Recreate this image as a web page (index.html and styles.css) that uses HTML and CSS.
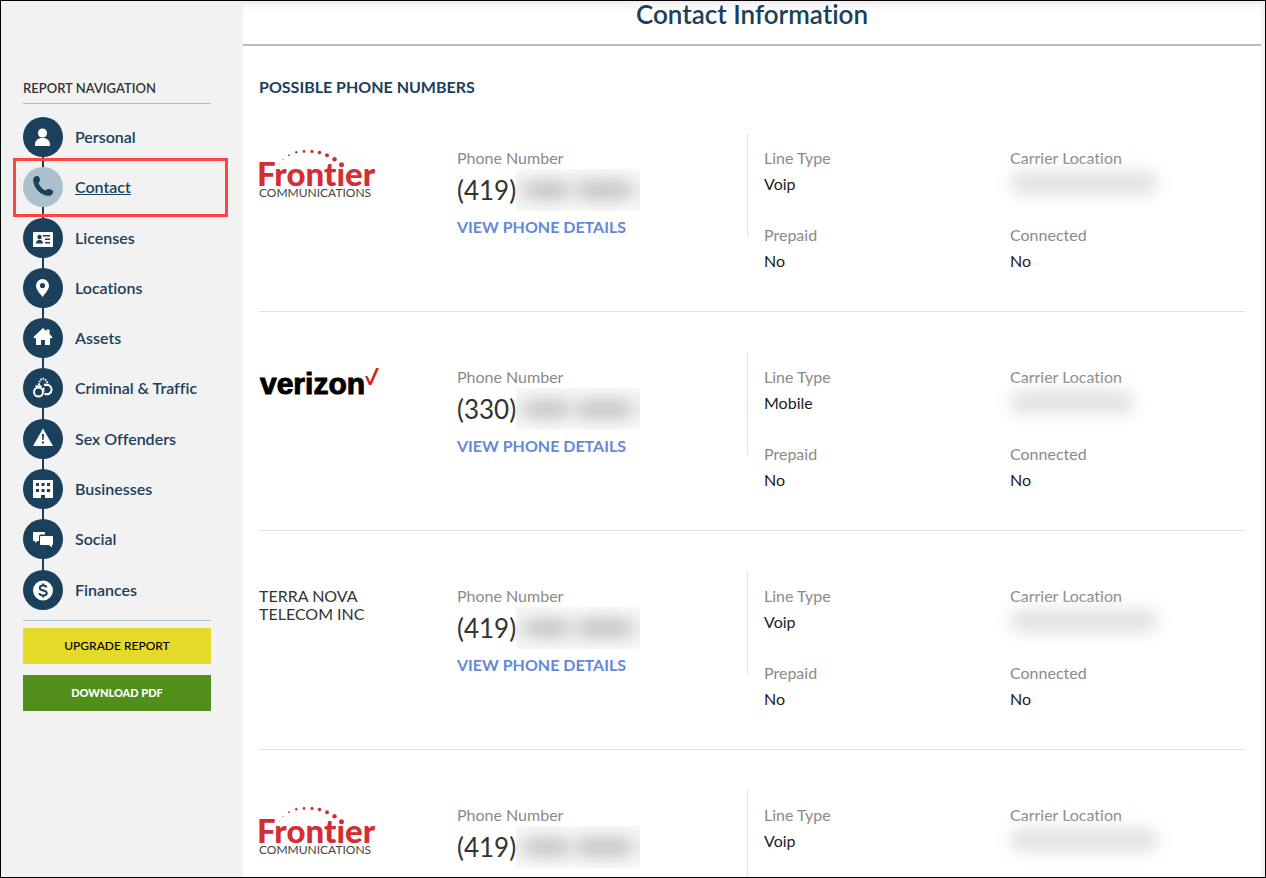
FILE: index.html
```html
<!DOCTYPE html>
<html lang="en">
<head>
<meta charset="utf-8">
<meta name="viewport" content="width=device-width, initial-scale=1">
<title>Contact Information</title>
<link rel="stylesheet" href="styles.css">
</head>
<body>
<div class="frame">
  <aside class="sidebar">
    <h2 class="nav-title">REPORT NAVIGATION</h2>
    <nav aria-label="Report navigation">
      <ul class="nav-list">
        <li><a href="#personal"><span class="dot"><svg viewBox="0 0 40 40"><circle cx="19.500" cy="16" r="4.600"/><path d="M12 29v-1.500c0-4 3-6.500 7.500-6.500s7.500 2.500 7.500 6.500V29z"/></svg></span>Personal</a></li>
        <li class="current"><a href="#contact" aria-current="page"><span class="dot"><svg viewBox="0 0 40 40"><path d="M10.300 12.500c.3-2.400 2.300-3.900 4.300-3.400 1.500.4 3 3.200 2.200 5.200l-1.300 1.500c.8 3 3.500 6.100 6.700 7.600l2.200-1.200c1.800-.7 4.700.4 5.500 1.800.8 1.700-.8 4.200-3.100 4.700-7.600 1.500-17.200-8.100-16.500-16.200z"/></svg></span>Contact</a></li>
        <li><a href="#licenses"><span class="dot"><svg viewBox="0 0 40 40"><rect x="10" y="14" width="20" height="15" rx="1"/><g fill="#1b405b"><circle cx="16.500" cy="19" r="2.200"/><path d="M13 25.500c0-5 7-5 7 0zM20 17h7v1.400h-7zM22 20.500h5v1.400h-5zM22 24h5v1.400h-5z"/></g></svg></span>Licenses</a></li>
        <li><a href="#locations"><span class="dot"><svg viewBox="0 0 40 40"><path fill-rule="evenodd" d="M19.500 11a6.500 6.500 0 0 0-6.500 6.500c0 4 3.500 7.500 6.500 11.500 3-4 6.500-7.500 6.500-11.500a6.500 6.500 0 0 0-6.500-6.500zm0 4a2.600 2.600 0 1 1 0 5.200 2.600 2.600 0 0 1 0-5.200z"/></svg></span>Locations</a></li>
        <li><a href="#assets"><span class="dot"><svg viewBox="0 0 40 40"><path d="M20 10l-9.500 9 .8 1.200H13V27h5v-5h4v5h5v-6.800h1.700l.8-1.200-3-3v-4.500h-3v1.700z"/></svg></span>Assets</a></li>
        <li><a href="#criminal"><span class="dot"><svg viewBox="0 0 40 40"><g fill="none" stroke="#fff"><circle cx="15.500" cy="24" r="4.500" stroke-width="2"/><path d="M22 17.300a4.700 4.700 0 1 1-.5 8.300" stroke-width="2"/><path d="M21 19.500q-1 2 0 4" stroke-width="1.500"/><path d="M12.500 18.200h6M21 16.800h5" stroke-width="2"/><path d="M16 17c0-3 1-5 3.500-6.500 2 0 4 1.500 5 5.500" stroke-width="2" stroke-dasharray="1.600 1"/></g></svg></span>Criminal &amp; Traffic</a></li>
        <li><a href="#offenders"><span class="dot"><svg viewBox="0 0 40 40"><path d="M20 9.500L30 27H10z"/><path fill="#1b405b" d="M19 15h2l-.3 6h-1.400zM19 22.500h2v2h-2z"/></svg></span>Sex Offenders</a></li>
        <li><a href="#businesses"><span class="dot"><svg viewBox="0 0 40 40"><path fill-rule="evenodd" d="M10 11h20v18h-8v-3h-4v3h-8zM13 14v3h3v-3zM18.500 14v3h3v-3zM24 14v3h3v-3zM13 20v3h3v-3zM18.500 20v3h3v-3zM24 20v3h3v-3z"/></svg></span>Businesses</a></li>
        <li><a href="#social"><span class="dot"><svg viewBox="0 0 40 40"><path d="M11 13h10q1 0 1 1v1.500h-4q-2 0-2 2V22h-1.500L12 24v-2h-1q-1 0-1-1v-7q0-1 1-1z"/><path d="M18 17h11q1 0 1 1v7q0 1-1 1v2.500L26 26h-8q-1 0-1-1v-7q0-1 1-1z"/></svg></span>Social</a></li>
        <li><a href="#finances"><span class="dot"><svg viewBox="0 0 40 40"><circle cx="20" cy="20.500" r="10"/><path fill="none" stroke="#1b405b" stroke-width="2" d="M23.500 17.500c-.3-1.500-1.500-2-3.300-2-2 0-3.400.8-3.400 2.400 0 3.500 7 1.500 7 5.200 0 1.800-1.500 2.500-3.600 2.500s-3.500-.8-3.800-2.500M20.200 13.500v2M20.200 25.500v2"/></svg></span>Finances</a></li>
      </ul>
    </nav>
    <div class="actions">
      <button type="button" class="btn upgrade">UPGRADE REPORT</button>
      <button type="button" class="btn download">DOWNLOAD PDF</button>
    </div>
  </aside>
  <main class="main">
    <header class="head"><h1>Contact Information</h1></header>
    <section class="phones">
      <h2 class="section-title">POSSIBLE PHONE NUMBERS</h2>

      <article class="row">
        <div class="carrier">
          <svg class="logo" viewBox="0 0 122 50" role="img" aria-label="Frontier Communications">
            <g fill="#d42e33">
              <circle cx="20.500" cy="15" r=".4"/><circle cx="24" cy="10.500" r=".6"/><circle cx="30" cy="6.200" r=".9"/><circle cx="37.300" cy="3.300" r="1.200"/><circle cx="45" cy="2.400" r="1.400"/><circle cx="53" cy="2.400" r="1.600"/><circle cx="60.500" cy="3.600" r="1.800"/><circle cx="68" cy="6.300" r="2"/><circle cx="75.500" cy="10.200" r="2.200"/><circle cx="82.500" cy="15.800" r="2.500"/>
              <text class="frontier-name" x="-2" y="37">Front&#305;er</text>
            </g>
            <text class="frontier-sub" x="0" y="48">COMMUNICATIONS</text>
          </svg>
        </div>
        <div class="phone">
          <p class="label">Phone Number</p>
          <p class="number">(419)<span class="redact"></span></p>
          <a class="details" href="#phone-1">VIEW PHONE DETAILS</a>
        </div>
        <dl class="facts">
          <div><dt>Line Type</dt><dd>Voip</dd></div>
          <div><dt>Carrier Location</dt><dd><span class="redact-loc"></span></dd></div>
          <div><dt>Prepaid</dt><dd>No</dd></div>
          <div><dt>Connected</dt><dd>No</dd></div>
        </dl>
      </article>

      <article class="row">
        <div class="carrier"><svg class="logo" viewBox="0 0 122 50" role="img" aria-label="Verizon"><text class="verizon-name" x="1" y="26">verizon</text><path fill="#d9271e" d="M106 8h2.500l2.700 5.500L117 0h3l-7.500 17h-2.600z"/></svg></div>
        <div class="phone">
          <p class="label">Phone Number</p>
          <p class="number">(330)<span class="redact"></span></p>
          <a class="details" href="#phone-2">VIEW PHONE DETAILS</a>
        </div>
        <dl class="facts">
          <div><dt>Line Type</dt><dd>Mobile</dd></div>
          <div><dt>Carrier Location</dt><dd><span class="redact-loc short"></span></dd></div>
          <div><dt>Prepaid</dt><dd>No</dd></div>
          <div><dt>Connected</dt><dd>No</dd></div>
        </dl>
      </article>

      <article class="row">
        <div class="carrier">TERRA NOVA TELECOM INC</div>
        <div class="phone">
          <p class="label">Phone Number</p>
          <p class="number">(419)<span class="redact"></span></p>
          <a class="details" href="#phone-3">VIEW PHONE DETAILS</a>
        </div>
        <dl class="facts">
          <div><dt>Line Type</dt><dd>Voip</dd></div>
          <div><dt>Carrier Location</dt><dd><span class="redact-loc"></span></dd></div>
          <div><dt>Prepaid</dt><dd>No</dd></div>
          <div><dt>Connected</dt><dd>No</dd></div>
        </dl>
      </article>

      <article class="row">
        <div class="carrier">
          <svg class="logo" viewBox="0 0 122 50" role="img" aria-label="Frontier Communications">
            <g fill="#d42e33">
              <circle cx="20.500" cy="15" r=".4"/><circle cx="24" cy="10.500" r=".6"/><circle cx="30" cy="6.200" r=".9"/><circle cx="37.300" cy="3.300" r="1.200"/><circle cx="45" cy="2.400" r="1.400"/><circle cx="53" cy="2.400" r="1.600"/><circle cx="60.500" cy="3.600" r="1.800"/><circle cx="68" cy="6.300" r="2"/><circle cx="75.500" cy="10.200" r="2.200"/><circle cx="82.500" cy="15.800" r="2.500"/>
              <text class="frontier-name" x="-2" y="37">Front&#305;er</text>
            </g>
            <text class="frontier-sub" x="0" y="48">COMMUNICATIONS</text>
          </svg>
        </div>
        <div class="phone">
          <p class="label">Phone Number</p>
          <p class="number">(419)<span class="redact"></span></p>
        </div>
        <dl class="facts">
          <div><dt>Line Type</dt><dd>Voip</dd></div>
          <div><dt>Carrier Location</dt><dd><span class="redact-loc"></span></dd></div>
        </dl>
      </article>
    </section>
  </main>
</div>
</body>
</html>
```
FILE: styles.css
```css
*, ::before, ::after { box-sizing: border-box; }

body, h1, h2, p, ul, dl, dd { margin: 0; padding: 0; }

body {
  font: 16px/26px Lato, "Open Sans", sans-serif;
  font-variant-ligatures: none;
  color: #333;
  background: #fff;
}

.frame {
  display: grid;
  grid-template-columns: 242px minmax(0, 1fr);
  height: 100vh;
  overflow: hidden;
  border: 1px solid #000;
  background: #f2f2f2;
}

.sidebar { padding: 73px 32px 0 22px; }

.nav-title {
  padding-bottom: 1px;
  font-size: 13px;
  font-weight: 600;
  line-height: 28px;
  border-bottom: 1px solid #abc0cc;
}

.nav-list {
  display: grid;
  grid-auto-rows: 1fr;
  min-height: 504px;
  margin-top: 13px;
  list-style: none;
  border-bottom: 1px solid #abc0cc;
}

.nav-list li {
  position: relative;
  background: linear-gradient(#1b405b, #1b405b) 19px 0 / 2px 100% no-repeat;
}

.nav-list li:last-child { background: none; }

.nav-list a {
  display: flex;
  align-items: center;
  gap: 12px;
  font-weight: 600;
  color: #1b405b;
  text-decoration: none;
}

.dot {
  flex: none;
  width: 40px;
  height: 40px;
  border-radius: 50%;
  background: #1b405b;
}

.dot svg { display: block; width: 40px; height: 40px; fill: #fff; }

.current a { text-decoration: underline; }
.current .dot { background: #abc0cc; }
.current .dot svg { fill: #1b405b; }

.current::after {
  content: "";
  position: absolute;
  inset: -9px -17px auto -10px;
  height: 59px;
  border: 3px solid #ff4343;
  pointer-events: none;
}

.actions { display: grid; gap: 11px; margin-top: 7px; }

.btn {
  height: 36px;
  border: 0;
  font: 500 12px/18px Lato, sans-serif;
}

.upgrade { background: #e6da28; color: #000; }
.download { background: #528f1a; color: #fff; font-size: 11px; font-weight: 900; }

.main { margin-right: 4px; background: #fff; }

.head {
  padding-bottom: 17px;
  text-align: center;
  border-bottom: 2px solid #abc0cc;
  background: linear-gradient(#f1edf0, #fff 10px);
}

h1 {
  font-size: 26px;
  font-weight: 600;
  line-height: 26px;
  color: #1b405b;
}

.phones { padding: 28px 16px 0; }

.section-title {
  font-size: 16px;
  font-weight: 700;
  line-height: 26px;
  color: #1b405b;
  margin-bottom: -7px;
}

.row {
  display: grid;
  grid-template-columns: 198fr 290fr 498fr;
  padding: 40px 0 37px;
  border-bottom: 1px solid #e0e0e0;
}

.carrier {
  padding: 16px 70px 0 0;
  line-height: 18px;
}

.logo { display: block; width: 122px; height: 50px; overflow: visible; }

.frontier-name {
  font: 900 33px Lato, sans-serif;
  font-variant-ligatures: none;
}

.frontier-sub { font: 400 12px Lato, sans-serif; fill: #444; }

.verizon-name {
  font: 700 30px "Liberation Sans", sans-serif;
  fill: #000;
  stroke: #000;
  stroke-width: 1px;
}

.phone { min-height: 115px; padding-top: 12px; }

.label, dt { color: #8a8a8a; }

.number {
  display: flex;
  align-items: center;
  height: 38px;
  font-size: 26px;
  white-space: nowrap;
}

.redact {
  display: flex;
  align-items: center;
  justify-content: space-evenly;
  width: 124px;
  height: 42px;
  overflow: hidden;
  background: linear-gradient(#f8f8f8, #eee 50%, #f8f8f8);
}

.redact::before, .redact::after {
  content: "";
  width: 44px;
  height: 16px;
  border-radius: 8px;
  background: #c2c2c2;
  filter: blur(8px);
}

.redact::after { width: 54px; }

.details {
  font-weight: 700;
  line-height: 36px;
  color: #6489d8;
  text-decoration: none;
}

.facts {
  display: grid;
  grid-template-columns: 246fr 235fr;
  align-content: start;
  gap: 25px 0;
  padding: 12px 0 0 17px;
  background: linear-gradient(#e0e0e0, #e0e0e0) 0 0 / 1px 103px no-repeat;
}

dd { height: 26px; color: #222; }

.redact-loc {
  display: block;
  width: 148px;
  height: 24px;
  background: #e2e2e2;
  border-radius: 12px;
  filter: blur(8px);
}

.redact-loc.short { width: 124px; }
```
